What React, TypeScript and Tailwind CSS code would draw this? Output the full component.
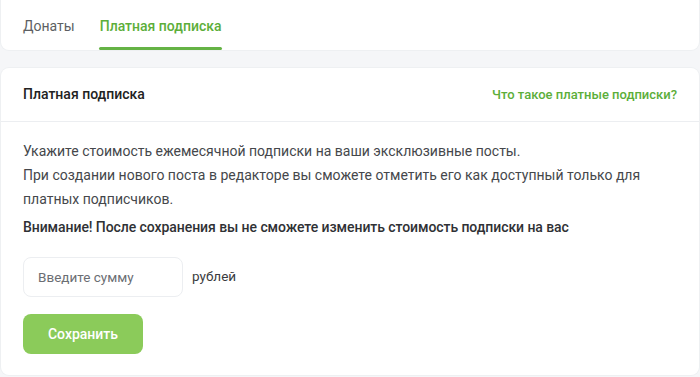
import { useState } from 'react';

const FONT = "font-['Roboto',_'Liberation_Sans',_sans-serif]";

export default function App() {
  const [tab, setTab] = useState<'donates' | 'subs'>('subs');
  const [amount, setAmount] = useState('');

  return (
    <div className={`${FONT} min-h-[377px] w-[700px] bg-[#f5f6f8] flex flex-col gap-[18px] pb-[2px] px-px`}>
      <nav className="flex h-[50px] gap-[25px] rounded-b-lg bg-white px-[22px] shadow-[0_0_0_1px_#eef0f2]">
        <button
          type="button"
          onClick={() => setTab('donates')}
          className={`relative pt-[3px] text-[14px] ${tab === 'donates' ? 'font-medium text-[#5cae3a]' : 'text-[#5d5f63]'}`}
        >
          Донаты
          {tab === 'donates' && <span className="absolute inset-x-0 bottom-0 h-[3px] rounded-full bg-[#65b345]" />}
        </button>
        <button
          type="button"
          onClick={() => setTab('subs')}
          className={`relative pt-[3px] text-[14px] ${tab === 'subs' ? 'font-medium text-[#5cae3a]' : 'text-[#5d5f63]'}`}
        >
          Платная подписка
          {tab === 'subs' && <span className="absolute -inset-x-px bottom-0 h-[3px] rounded-full bg-[#65b345]" />}
        </button>
      </nav>

      <section className="flex flex-1 flex-col rounded-lg bg-white shadow-[0_0_0_1px_#eef0f2]">
        <header className="flex h-[54px] items-center justify-between border-b border-[#eceef1] px-[22px]">
          <h2 className="text-[14px] font-medium text-[#222]">Платная подписка</h2>
          <a href="#" className="text-[13px] font-medium text-[#5cae3a]">
            Что такое платные подписки?
          </a>
        </header>

        <div className="flex flex-col px-[22px] pt-[17px] text-[14px] text-[#45474b]">
          <p className="leading-[24px]">
            Укажите стоимость ежемесячной подписки на ваши эксклюзивные посты.
            <br />
            При создании нового поста в редакторе вы сможете отметить его как доступный только для платных подписчиков.
          </p>
          <p className="mt-[4px] text-[14px] tracking-[-0.07px] leading-[24px] font-medium text-[#2f3135]">
            Внимание! После сохранения вы не сможете изменить стоимость подписки на вас
          </p>

          <div className="mt-[18px] flex items-center gap-[9px]">
            <input
              value={amount}
              onChange={(e) => setAmount(e.target.value)}
              placeholder="Введите сумму"
              className="h-[40px] w-[160px] rounded-lg border border-[#eceef1] px-[14px] text-[13.5px] text-[#333] placeholder:text-[#6b6e73] outline-none"
            />
            <span className="-mt-[2px] text-[13.5px] text-[#3a3c40]">рублей</span>
          </div>

          <button
            type="button"
            className="mt-[17px] h-[40px] w-[120px] rounded-lg bg-[#8bcb5a] text-[14px] font-medium text-white"
          >
            Сохранить
          </button>
        </div>
      </section>
    </div>
  );
}
